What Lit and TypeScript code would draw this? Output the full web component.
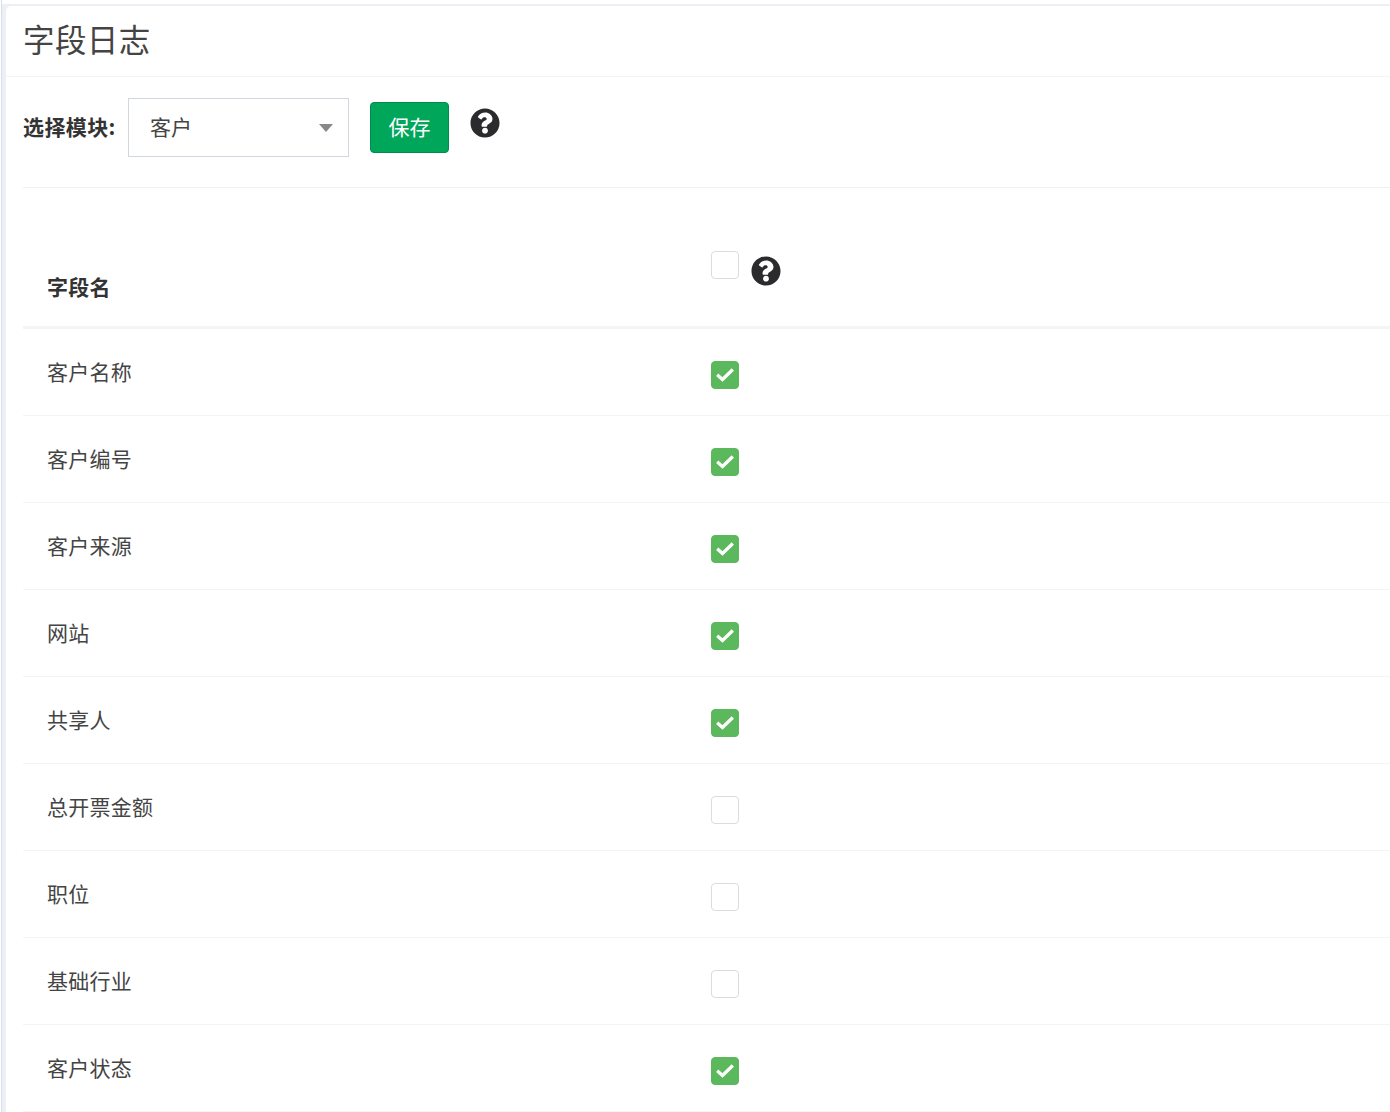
import { LitElement, html, css, svg } from "lit";
import { customElement } from "lit/decorators.js";

const rows: [string, boolean][] = [
  ["客户名称", true],
  ["客户编号", true],
  ["客户来源", true],
  ["网站", true],
  ["共享人", true],
  ["总开票金额", false],
  ["职位", false],
  ["基础行业", false],
  ["客户状态", true],
];

const help = (cls: string) => html`<svg class=${cls} viewBox="0 0 512 512" aria-hidden="true">
  ${svg`<path fill="#2b2b2d" fill-rule="evenodd" d="M504 256c0 137-111 248-248 248S8 393 8 256C8 119 119 8 256 8s248 111 248 248zM262 78c-58 0-96 25-125 68-3.500 5.300-2.400 12.400 2.700 16.300l42 31.700c5.200 3.900 12.600 3 16.700-2.100 17.900-22.700 28-33 50-33 17 0 37 11 37 27 0 12-10 18-28 28-27 15-60 33-60 79v14c0 6.600 5.400 12 12 12h72c6.600 0 12-5.400 12-12v-6c0-31 90-32 90-116 0-62-65-108-121-108zM256 337c-28 0-50 22-50 50s22 50 50 50 50-22 50-50-22-50-50-50z"/>`}
</svg>`;

@customElement("app-root")
export class AppRoot extends LitElement {
  static styles = css`
    :host {
      display: block;
      height: 1112px;
      overflow: hidden;
      background: #fff;
      font-family: "Noto Sans CJK SC", "Liberation Sans", sans-serif;
      color: #333;
    }
    .edge {
      height: 1112px;
      box-sizing: border-box;
      margin-left: 1px;
      border-left: 1px solid #d8dde8;
    }
    .bg {
      margin-top: 4px;
      display: inline-block;
      width: 100%;
      height: 1108px;
      box-sizing: border-box;
      padding: 2px 0 0 4px;
      background: #ecf0f5;
    }
    .card {
      background: #fff;
      height: 1106px;
      border-top-left-radius: 5px;
      overflow: hidden;
    }
    .head {
      height: 71px;
      box-sizing: border-box;
      border-bottom: 1px solid #f2f4f6;
      padding: 0 0 4px 17px;
      display: flex;
      align-items: center;
    }
    h1 {
      margin: 0;
      font-size: 31.5px;
      font-weight: 400;
      line-height: 1;
      color: #444;
      letter-spacing: 0.4px;
    }
    .tools {
      margin-left: 17px;
      height: 111px;
      box-sizing: border-box;
      border-bottom: 1px solid #eef0f2;
      display: flex;
      align-items: flex-start;
    }
    .lbl {
      font-size: 21px;
      font-weight: 700;
      line-height: 28px;
      margin-top: 35px;
      width: 105px;
      white-space: nowrap;
      letter-spacing: 0.4px;
    }
    .sel {
      width: 221px;
      height: 59px;
      box-sizing: border-box;
      border: 1px solid #d2d6de;
      margin-top: 21px;
      padding: 0 0 3px 21px;
      display: flex;
      align-items: center;
      justify-content: space-between;
      font-size: 21px;
      color: #444;
    }
    .caret {
      width: 0;
      height: 0;
      border-style: solid;
      border-width: 8px 7px 0;
      border-color: #888 transparent transparent;
      margin: 3px 15px 0 0;
    }
    .btn {
      width: 79px;
      height: 51px;
      box-sizing: border-box;
      margin: 25px 0 0 21px;
      padding-bottom: 3px;
      background: #00a65a;
      border: 1px solid #008d4c;
      border-radius: 4px;
      color: #fff;
      font-size: 21px;
      display: flex;
      align-items: center;
      justify-content: center;
    }
    .q1 {
      width: 30px;
      height: 30px;
      margin: 31px 0 0 21px;
    }
    .table {
      margin: 0 0 0 17px;
      font-size: 21px;
    }
    .th {
      height: 141px;
      box-sizing: border-box;
      border-bottom: 3px solid #f4f4f4;
      display: grid;
      grid-template-columns: 664px 1fr;
      padding-left: 24px;
    }
    .th b {
      align-self: end;
      line-height: 28px;
      margin-bottom: 26px;
      letter-spacing: 0.3px;
    }
    .thc {
      display: flex;
      align-items: flex-start;
      padding-top: 63px;
    }
    .q2 {
      width: 30px;
      height: 30px;
      margin: 5px 0 0 12px;
    }
    .row {
      height: 87px;
      box-sizing: border-box;
      border-bottom: 1px solid #f4f4f4;
      display: grid;
      grid-template-columns: 664px 1fr;
      padding-left: 24px;
    }
    .row span {
      line-height: 28px;
      padding-top: 28px;
      color: #444;
      letter-spacing: 0.25px;
    }
    .row .cb {
      margin-top: 32px;
    }
    .cb {
      width: 28px;
      height: 28px;
      box-sizing: border-box;
      border: 1px solid #dcdcdc;
      border-radius: 4px;
      background: #fff;
      display: block;
    }
    .cb.on {
      background: #5cb85c;
      border-color: #5cb85c;
    }
    .cb svg {
      display: block;
      width: 26px;
      height: 26px;
    }
  `;

  render() {
    return html`<div class="edge">
      <div class="bg">
        <div class="card">
          <div class="head"><h1>字段日志</h1></div>
          <div class="tools">
            <div class="lbl">选择模块:</div>
            <div class="sel">客户<i class="caret"></i></div>
            <div class="btn">保存</div>
            ${help("q1")}
          </div>
          <div class="table">
            <div class="th">
              <b>字段名</b>
              <div class="thc"><i class="cb"></i>${help("q2")}</div>
            </div>
            ${rows.map(
              ([n, on]) => html`<div class="row">
                <span>${n}</span>
                ${on
                  ? html`<i class="cb on"
                      ><svg viewBox="0 0 26 26"><path d="M5.200 12.800l5.300 4.700 10.300-10" fill="none" stroke="#fff" stroke-width="3.300"/></svg
                    ></i>`
                  : html`<i class="cb"></i>`}
              </div>`
            )}
          </div>
        </div>
      </div>
    </div>`;
  }
}
